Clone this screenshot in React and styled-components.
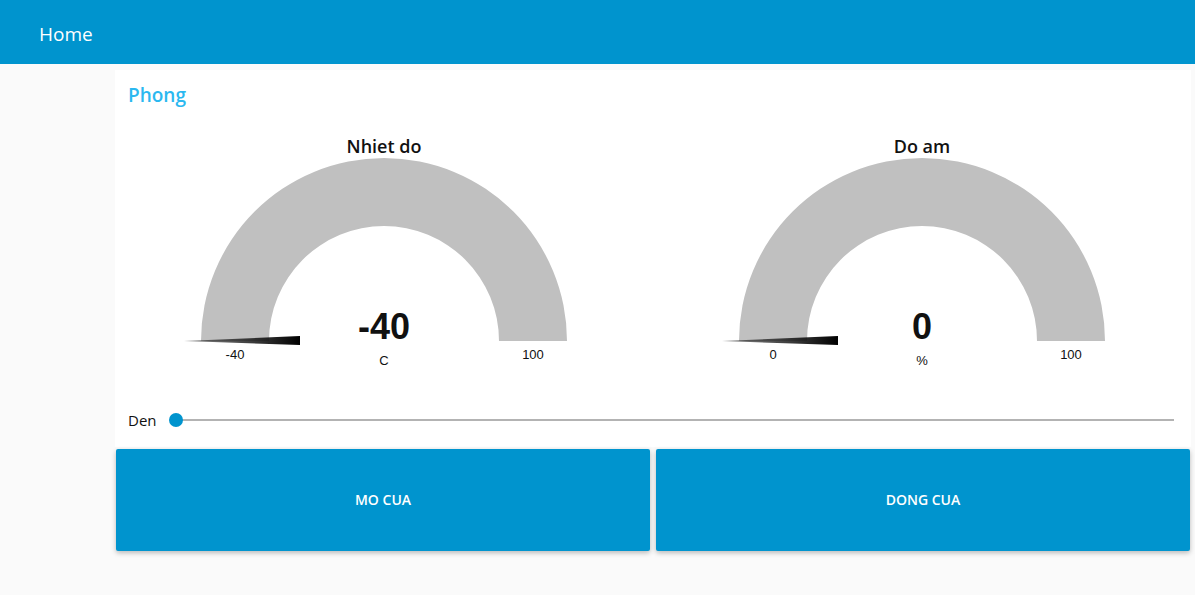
import React from "react";
import styled, { createGlobalStyle } from "styled-components";

const GlobalStyle = createGlobalStyle`
  body {
    margin: 0;
    background-color: #fafafa;
    font-family: "Open Sans", "Liberation Sans", sans-serif;
  }
`;

const Page = styled.div`
  width: 1195px;
  height: 595px;
  overflow: hidden;
  background-color: #fafafa;
`;

const Toolbar = styled.div`
  height: 64px;
  box-sizing: border-box;
  background-color: #0094ce;
  display: flex;
  align-items: center;
  padding: 4px 0 0 39px;
  color: #ffffff;
  font-size: 19px;
  font-weight: 500;
`;

const Content = styled.div`
  padding: 6px 0 0 115px;
  width: 1076px;
`;

const Group = styled.div`
  background-color: #ffffff;
  display: flex;
  flex-direction: column;
`;

const GroupTitle = styled.div`
  height: 50px;
  padding-left: 13px;
  display: flex;
  align-items: center;
  color: #2bb8f0;
  font-size: 19px;
  font-weight: 600;
`;

const GaugeRow = styled.div`
  display: flex;
  padding-top: 5px;
`;

const GaugeCell = styled.div`
  flex: 1;
  display: flex;
  justify-content: center;
`;

const SliderRow = styled.div`
  height: 62px;
  box-sizing: border-box;
  display: flex;
  align-items: center;
  padding: 7px 17px 0 13px;
  gap: 12px;
`;

const SliderLabel = styled.div`
  font-size: 15px;
  color: #111111;
`;

const Track = styled.div`
  flex: 1;
  height: 2px;
  background-color: #b3b3b3;
  position: relative;
  margin-left: 7px;
`;

const Thumb = styled.div`
  position: absolute;
  left: -7px;
  top: -6px;
  width: 14px;
  height: 14px;
  border-radius: 50%;
  background-color: #0094ce;
`;

const ButtonRow = styled.div`
  display: flex;
  gap: 6px;
  padding: 2px 1px 0 1px;
`;

const Button = styled.button`
  flex: 1;
  height: 102px;
  border: none;
  border-radius: 2px;
  background-color: #0094ce;
  color: #ffffff;
  font-family: "Open Sans", "Liberation Sans", sans-serif;
  font-size: 14px;
  font-weight: 600;
  padding-bottom: 2px;
  box-shadow: 0 2px 5px rgba(0, 0, 0, 0.26);
`;

const Gauge = ({ id, title, value, unit, min, max }) => (
  <svg width="538" height="260" viewBox="-269 -216 538 260">
    <defs>
      <linearGradient id={id} x1="0" x2="1" y1="0" y2="0">
        <stop offset="0" stopColor="#333333" stopOpacity="0.6" />
        <stop offset="1" stopColor="#000000" />
      </linearGradient>
    </defs>
    <text
      x="0"
      y="-188"
      textAnchor="middle"
      fontFamily="Open Sans, Liberation Sans, sans-serif"
      fontSize="18"
      fontWeight="600"
      fill="#111111"
    >
      {title}
    </text>
    <path
      d="M -183 0 A 183 183 0 0 1 183 0 L 115 0 A 115 115 0 0 0 -115 0 Z"
      fill="#c0c0c0"
    />
    <polygon points="-200,0 -84,-5 -84,4" fill={`url(#${id})`} />
    <text
      x="0"
      y="-2"
      textAnchor="middle"
      fontFamily="Liberation Sans, Arial, sans-serif"
      fontSize="36"
      fontWeight="700"
      fill="#111111"
    >
      {value}
    </text>
    <text
      x="0"
      y="24"
      textAnchor="middle"
      fontFamily="Liberation Sans, Arial, sans-serif"
      fontSize="13"
      fill="#111111"
    >
      {unit}
    </text>
    <text
      x="-149"
      y="18"
      textAnchor="middle"
      fontFamily="Liberation Sans, Arial, sans-serif"
      fontSize="13"
      fill="#111111"
    >
      {min}
    </text>
    <text
      x="149"
      y="18"
      textAnchor="middle"
      fontFamily="Liberation Sans, Arial, sans-serif"
      fontSize="13"
      fill="#111111"
    >
      {max}
    </text>
  </svg>
);

const App = () => {
  return (
    <Page>
      <GlobalStyle />
      <Toolbar>Home</Toolbar>
      <Content>
        <Group>
          <GroupTitle>Phong</GroupTitle>
          <GaugeRow>
            <GaugeCell>
              <Gauge id="g1" title="Nhiet do" value="-40" unit="C" min="-40" max="100" />
            </GaugeCell>
            <GaugeCell>
              <Gauge id="g2" title="Do am" value="0" unit="%" min="0" max="100" />
            </GaugeCell>
          </GaugeRow>
          <SliderRow>
            <SliderLabel>Den</SliderLabel>
            <Track>
              <Thumb />
            </Track>
          </SliderRow>
        </Group>
        <ButtonRow>
          <Button>MO CUA</Button>
          <Button>DONG CUA</Button>
        </ButtonRow>
      </Content>
    </Page>
  );
};

export default App;
